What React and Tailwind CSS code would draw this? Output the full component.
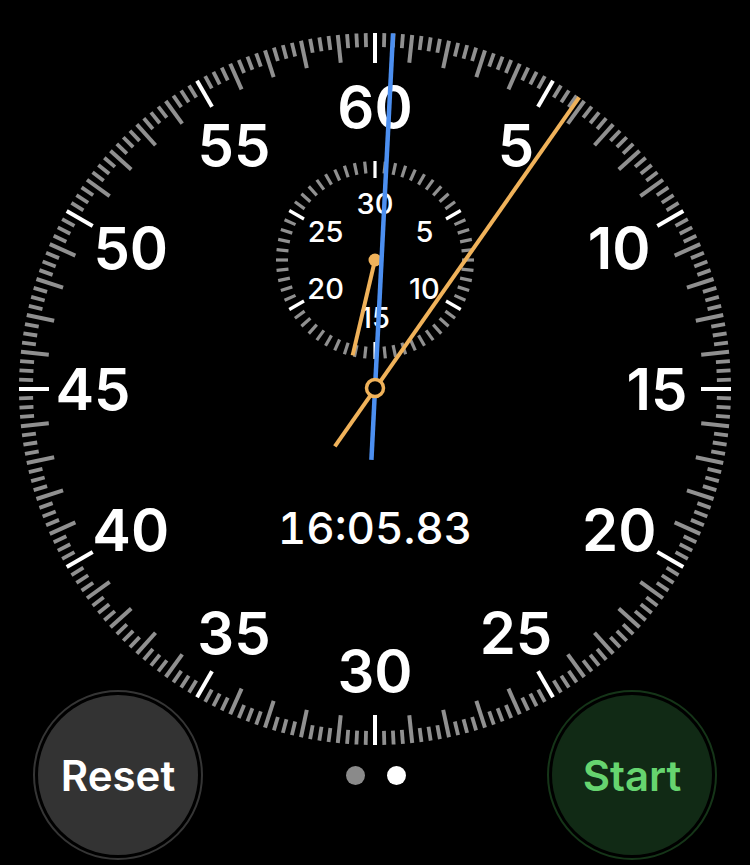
import React from 'react';

const CX = 375;
const CY = 389;
const SUB_Y = 260;

const polar = (cx, cy, r, deg) => {
  const a = (deg * Math.PI) / 180;
  return [cx + r * Math.sin(a), cy - r * Math.cos(a)];
};

function Tick({ cx, cy, r, len, deg, color, width }) {
  const [x1, y1] = polar(cx, cy, r, deg);
  const [x2, y2] = polar(cx, cy, r - len, deg);
  return <line x1={x1} y1={y1} x2={x2} y2={y2} stroke={color} strokeWidth={width} />;
}

function Hand({ cx, cy, deg, len, tail, color, width }) {
  const [x1, y1] = polar(cx, cy, len, deg);
  const [x2, y2] = polar(cx, cy, -tail, deg);
  return <line x1={x1} y1={y1} x2={x2} y2={y2} stroke={color} strokeWidth={width} />;
}

function Dial() {
  const outer = Array.from({ length: 240 }, (_, i) => i);
  const inner = Array.from({ length: 60 }, (_, i) => i);
  const bigNums = [60, 5, 10, 15, 20, 25, 30, 35, 40, 45, 50, 55];
  const smallNums = [30, 5, 10, 15, 20, 25];

  return (
    <svg width="750" height="865" viewBox="0 0 750 865" className="[grid-area:1/1] block">
      {outer.map((i) => {
        const deg = i * 1.5;
        if (i % 20 === 0)
          return <Tick key={i} cx={CX} cy={CY} r={356} len={30} deg={deg} color="#ffffff" width={4} />;
        if (i % 4 === 0)
          return <Tick key={i} cx={CX} cy={CY} r={356} len={28} deg={deg} color="#909090" width={4} />;
        return <Tick key={i} cx={CX} cy={CY} r={356} len={14} deg={deg} color="#909090" width={3.8} />;
      })}

      {bigNums.map((n, i) => {
        const [x, y] = polar(CX, CY, 282, i * 30);
        return (
          <text key={n} x={x} y={y + 21} textAnchor="middle" fill="#fff" fontFamily="Inter, sans-serif" fontSize="58" fontWeight="600">
            {n}
          </text>
        );
      })}

      {inner.map((i) => {
        const deg = i * 6;
        if (i % 10 === 0)
          return <Tick key={i} cx={CX} cy={SUB_Y} r={99} len={17} deg={deg} color="#ffffff" width={3.2} />;
        return <Tick key={i} cx={CX} cy={SUB_Y} r={99} len={12} deg={deg} color="#909090" width={3.2} />;
      })}

      {smallNums.map((n, i) => {
        const [x, y] = polar(CX, SUB_Y, 57, i * 60);
        return (
          <text key={n} x={x} y={y + 10.5} textAnchor="middle" fill="#fff" fontFamily="Inter, sans-serif" fontSize="29" fontWeight="500">
            {n}
          </text>
        );
      })}

      <text x={CX} y={528 + 16} textAnchor="middle" fill="#fff" fontFamily="Inter, sans-serif" fontSize="44" fontWeight="500" style={{ fontVariantNumeric: 'tabular-nums' }}>
        16:05.83
      </text>

      {/* minutes hand on the small dial */}
      <Hand cx={CX} cy={SUB_Y} deg={193.2} len={98} tail={0} color="#f0b25a" width={4} />
      <circle cx={CX} cy={SUB_Y} r={6.5} fill="#f0b25a" />

      {/* lap hand */}
      <Hand cx={CX} cy={CY} deg={2.9} len={356} tail={71} color="#4c8ff0" width={4.5} />
      {/* seconds hand */}
      <Hand cx={CX} cy={CY} deg={35} len={356} tail={70} color="#f0b25a" width={4} />
      <circle cx={CX} cy={CY - 1} r={8.5} fill="#000" stroke="#f0b25a" strokeWidth={3.5} />
    </svg>
  );
}

function RoundButton({ label, ring, fill, text }) {
  return (
    <button className={`w-[170px] h-[170px] rounded-full border-2 p-[3px] ${ring}`}>
      <div className={`w-full h-full rounded-full flex items-center justify-center ${fill}`}>
        <span className={`text-[42px] font-semibold ${text}`} style={{ fontFamily: 'Inter, sans-serif' }}>
          {label}
        </span>
      </div>
    </button>
  );
}

export default function App() {
  return (
    <div className="grid w-[750px] h-[865px] bg-black overflow-hidden">
      <Dial />
      <div className="[grid-area:1/1] flex flex-col justify-end pb-[5px]">
        <div className="flex items-center justify-between px-[33px]">
          <RoundButton label="Reset" ring="border-[#353535]" fill="bg-[#333333]" text="text-white" />
          <div className="flex items-center gap-[22px] ml-[2px]">
            <div className="w-[19px] h-[19px] rounded-full bg-[#8a8a8a]" />
            <div className="w-[19px] h-[19px] rounded-full bg-white" />
          </div>
          <RoundButton label="Start" ring="border-[#153518]" fill="bg-[#112a15]" text="text-[#66d46f]" />
        </div>
      </div>
    </div>
  );
}
